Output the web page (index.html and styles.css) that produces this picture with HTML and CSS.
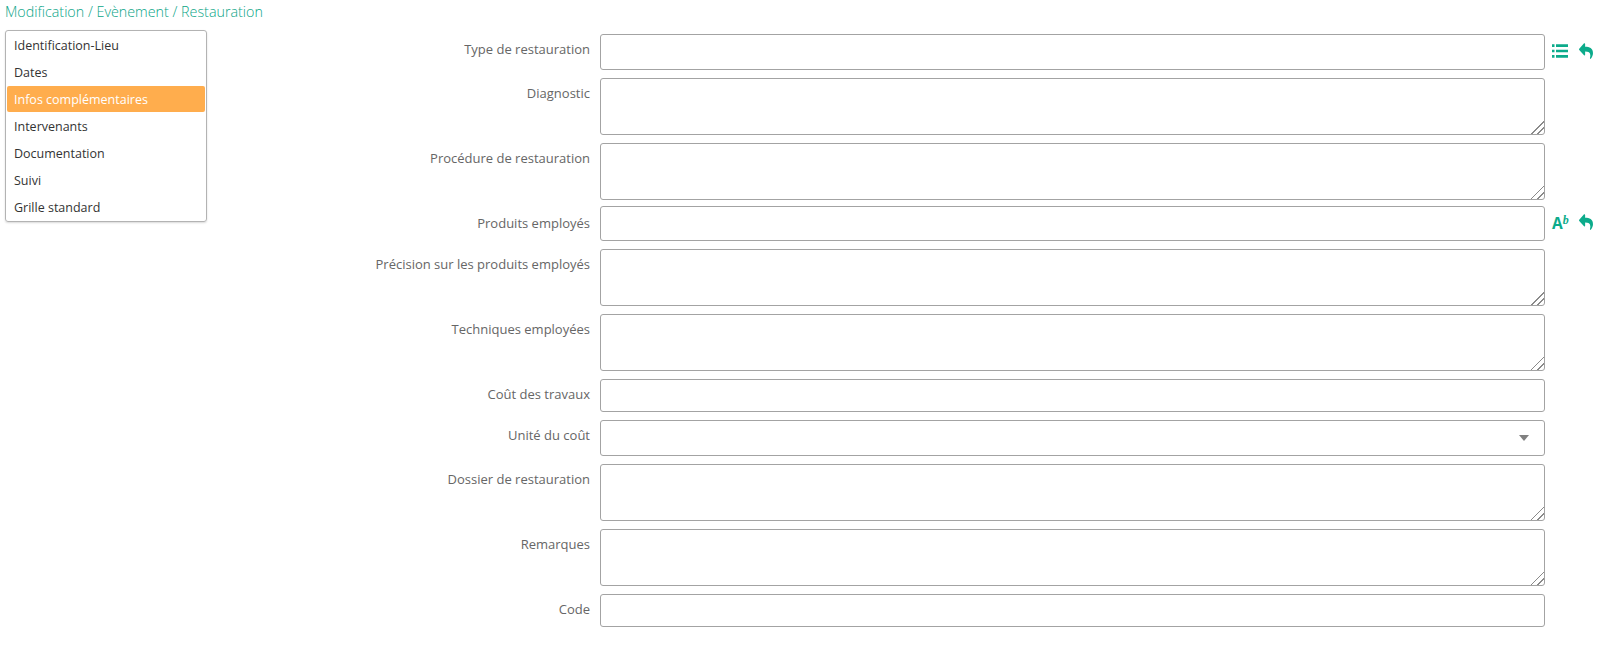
FILE: index.html
```html
<!DOCTYPE html>
<html lang="fr">
<head>
    <meta charset="UTF-8">
    <title>Restauration</title>
    <link rel="stylesheet" href="styles.css">
</head>
<body>
    <div class="fil">Modification / Evènement / Restauration</div>
    <div class="page">
        <ul class="menu">
            <li>Identification-Lieu</li>
            <li>Dates</li>
            <li class="actif">Infos complémentaires</li>
            <li>Intervenants</li>
            <li>Documentation</li>
            <li>Suivi</li>
            <li>Grille standard</li>
        </ul>
        <form class="formulaire">
            <div class="ligne">
                <label>Type de restauration</label>
                <input type="text" class="champ haut">
                <div class="icones">
                    <svg width="16" height="14" viewBox="0 0 16 14"><path d="M0 .3h2.500v2.600H0zM0 5.700h2.500v2.600H0zM0 11.100h2.500v2.600H0zM4 .3h12v2.600H4zM4 5.700h12v2.600H4zM4 11.100h12v2.600H4z"/></svg>
                    <svg width="14" height="18" viewBox="0 0 512 512" preserveAspectRatio="none"><path d="M8.309 189.836L184.313 37.851C199.719 24.546 224 35.347 224 56.015v80.053c160.629 1.839 288 34.032 288 186.258 0 61.441-39.581 122.309-83.333 154.132-13.653 9.931-33.111-2.533-28.077-18.631 45.344-145.012-21.507-183.510-176.590-185.742V360c0 20.700-24.300 31.453-39.687 18.164l-176.004-152c-11.071-9.562-11.086-26.753 0-36.328z"/></svg>
                </div>
            </div>
            <div class="ligne">
                <label>Diagnostic</label>
                <textarea class="champ"></textarea>
            </div>
            <div class="ligne serre">
                <label>Procédure de restauration</label>
                <textarea class="champ"></textarea>
            </div>
            <div class="ligne produits">
                <label>Produits employés</label>
                <input type="text" class="champ">
                <div class="icones">
                    <span class="casse">A<i>b</i></span>
                    <svg width="14" height="18" viewBox="0 0 512 512" preserveAspectRatio="none"><path d="M8.309 189.836L184.313 37.851C199.719 24.546 224 35.347 224 56.015v80.053c160.629 1.839 288 34.032 288 186.258 0 61.441-39.581 122.309-83.333 154.132-13.653 9.931-33.111-2.533-28.077-18.631 45.344-145.012-21.507-183.510-176.590-185.742V360c0 20.700-24.300 31.453-39.687 18.164l-176.004-152c-11.071-9.562-11.086-26.753 0-36.328z"/></svg>
                </div>
            </div>
            <div class="ligne">
                <label>Précision sur les produits employés</label>
                <textarea class="champ"></textarea>
            </div>
            <div class="ligne">
                <label>Techniques employées</label>
                <textarea class="champ"></textarea>
            </div>
            <div class="ligne">
                <label>Coût des travaux</label>
                <input type="text" class="champ">
            </div>
            <div class="ligne">
                <label>Unité du coût</label>
                <div class="champ haut liste"><span class="fleche"></span></div>
            </div>
            <div class="ligne">
                <label>Dossier de restauration</label>
                <textarea class="champ"></textarea>
            </div>
            <div class="ligne">
                <label>Remarques</label>
                <textarea class="champ"></textarea>
            </div>
            <div class="ligne">
                <label>Code</label>
                <input type="text" class="champ">
            </div>
        </form>
    </div>
</body>
</html>
```

FILE: styles.css
```css
* {
    margin: 0;
    padding: 0;
    box-sizing: border-box;
}
body {
    font-family: "Open Sans", sans-serif;
    font-size: 13px;
    color: #333;
    background-color: white;
    height: 654px;
    overflow: hidden;
}
.fil {
    font-size: 14.300px;
    font-weight: 300;
    line-height: 20px;
    color: #0aa587;
    padding: 2px 0 0 5px;
    height: 30px;
}
.page {
    display: flex;
    align-items: flex-start;
}
.menu {
    list-style: none;
    width: 202px;
    margin-left: 5px;
    padding: 0 1px 1px;
    border: 1px solid #b3b3b3;
    border-radius: 3px;
    box-shadow: 0 1px 2px rgba(0, 0, 0, 0.15);
}
.menu li {
    height: 26px;
    line-height: 27px;
    margin-top: 1px;
    padding-left: 7px;
    font-size: 12.500px;
    white-space: nowrap;
}
.menu .actif {
    background-color: #ffad4d;
    color: white;
    border-radius: 2px;
}
.formulaire {
    padding-top: 4px;
    flex: 1;
}
.ligne {
    display: flex;
    align-items: flex-start;
    margin-bottom: 8px;
}
.serre {
    margin-bottom: 6px;
}
label {
    width: 393px;
    padding: 6px 10px 0 0;
    text-align: right;
    color: #666;
    font-size: 13px;
    line-height: 18px;
}
.champ {
    display: block;
    width: 945px;
    height: 33px;
    border: 1px solid #a3a3a3;
    border-radius: 3px;
    background-color: white;
    font-family: inherit;
}
.haut {
    height: 36px;
}
textarea.champ {
    height: 57px;
}
textarea::-webkit-resizer {
    background: linear-gradient(135deg, transparent 55%, #8a8a8a 55%, #8a8a8a 60%, transparent 60%, transparent 76%, #8a8a8a 76%, #8a8a8a 81%, transparent 81%);
}
.produits label {
    padding-top: 8px;
}
.produits .champ {
    height: 35px;
}
.produits .icones {
    height: 32px;
}
.liste {
    display: flex;
    align-items: center;
    justify-content: flex-end;
    padding-right: 15px;
}
.fleche {
    width: 0;
    height: 0;
    border-left: 5px solid transparent;
    border-right: 5px solid transparent;
    border-top: 6px solid #808080;
}
.icones {
    display: flex;
    align-items: center;
    height: 34px;
    width: 55px;
    padding-left: 7px;
    gap: 11px;
    color: #0cab8b;
    fill: #0cab8b;
}
.casse {
    font-weight: bold;
    font-size: 15.500px;
    line-height: 15px;
    width: 16px;
    white-space: nowrap;
}
.casse i {
    font-family: "Liberation Serif", serif;
    font-size: 12px;
    vertical-align: 5px;
}
```
